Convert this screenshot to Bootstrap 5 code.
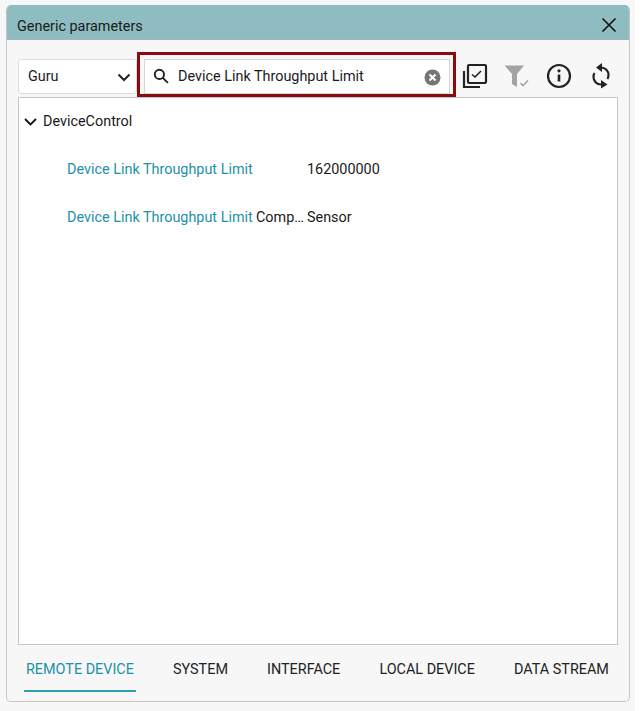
<!DOCTYPE html>
<html lang="en">
<head>
<meta charset="utf-8">
<title>Generic parameters</title>
<link rel="stylesheet" href="https://cdn.jsdelivr.net/npm/bootstrap@5.3.0/dist/css/bootstrap.min.css">
<style>
html,body{background:#fff;margin:0;height:711px;overflow:hidden}
body{font-family:Roboto,"Liberation Sans",sans-serif;font-size:14.4px;color:#1a1a1a}
.stage{width:635px;height:711px;background:#f7f7f7;padding:5px 5px 9px 6px}
.panel-win{height:697px;border:1px solid #c6c6c6;border-top:0;border-radius:5px;background:#f7f7f7;overflow:hidden}
.win-head{height:35px;background:#8fbcc0;border-bottom:1px solid #a9b5b6;padding:6px 12px 0 10px}
.win-title{padding-top:3px}
.win-body{padding:19px 11px 0 11px}
.tool-row{height:38px}
.sel-box{width:119px;height:35px;background:#fff;border:1px solid #dcdcdc;border-radius:3px;padding:1px 5px 0 9px}
.search-wrap{width:319px;height:45px;margin-top:-7px;border:3px solid #8b0a0f;background:#f7f7f7;padding:4px 3px 0 4px}
.search-box{height:35px;background:#fff;border:1px solid #d6d6d6;padding:1px 8px 0 8px;gap:9px}
.search-box span{flex:1}
.glass-ico{margin-bottom:2px}
.tool-icons{gap:16px;margin-left:6px;margin-top:4px}
.tree-box{height:548px;background:#fff;border:1px solid #c6c6c6;padding-top:1px}
.tree-head{height:45px;margin-bottom:2px;padding-left:5px;gap:6px}
.tree-line{height:48px;white-space:nowrap}
.cell-name{width:189px;margin-left:48px;color:#1c92a8}
.cell-tail{width:51px}
.tab-row{margin-top:12px;height:35px;gap:35.1px;margin-left:6px}
.tab-item{height:35px;color:#222;line-height:26px;padding:0 2px}
.tab-item.on{color:#1c92a8;border-bottom:2px solid #2f9fb2}
</style>
</head>
<body>
<div class="stage">
  <div class="panel-win">
    <div class="win-head d-flex align-items-center justify-content-between">
      <span class="win-title">Generic parameters</span>
      <svg width="16" height="16" viewBox="0 0 16 16" fill="none" stroke="#111" stroke-width="1.6"><path d="M1.5 1.5 14.5 14.5M14.5 1.5 1.5 14.5"/></svg>
    </div>
    <div class="win-body">
      <div class="tool-row d-flex align-items-start">
        <div class="sel-box d-flex align-items-center justify-content-between">
          <span>Guru</span>
          <svg width="14" height="9" viewBox="0 0 14 9" fill="none" stroke="#222" stroke-width="2"><path d="M1.5 1.5 7 7l5.500-5.500"/></svg>
        </div>
        <div class="search-wrap">
          <div class="search-box d-flex align-items-center">
            <svg class="glass-ico" width="16" height="16" viewBox="0 0 15 15" fill="none" stroke="#222" stroke-width="1.8"><circle cx="6" cy="6" r="4.3"/><path d="M9.200 9.200 14 14"/></svg>
            <span>Device Link Throughput Limit</span>
            <svg width="17" height="17" viewBox="0 0 17 17"><circle cx="8.500" cy="8.500" r="8" fill="#757575"/><path d="M5.500 5.500l6 6M11.500 5.500l-6 6" stroke="#fff" stroke-width="2"/></svg>
          </div>
        </div>
        <div class="tool-icons d-flex align-items-center">
          <svg width="26" height="26" viewBox="0 0 26 26" fill="none" stroke="#222"><path d="M2 8v16h16" stroke-width="2.200"/><rect x="6" y="2" width="18" height="18" rx="1" stroke-width="2.200"/><path d="M10 11.500l3 2.500 6-6" stroke-width="1.600"/></svg>
          <svg width="26" height="26" viewBox="0 0 26 26"><path d="M0.500 2.500h19.500l-7 8.500v13l-5-3v-10z" fill="#a3a3a3"/><path d="M16.500 20l2.500 2.500 5-5" fill="none" stroke="#a3a3a3" stroke-width="1.600"/></svg>
          <svg width="26" height="26" viewBox="0 0 26 26" fill="none" stroke="#222" stroke-width="2.200"><circle cx="13" cy="13" r="11"/><path d="M13 11.500v7" stroke-width="2.600"/><circle cx="13" cy="7.800" r="1.600" fill="#222" stroke="none"/></svg>
          <svg width="26" height="26" viewBox="0 0 26 26" fill="none" stroke="#222" stroke-width="2.200"><path d="M13 4.500c4.500 0 7.500 3.500 7.500 7.500 0 1.500-.3 2.800-1 4"/><path d="M6.500 10c-.8 1.200-1 2.500-1 4 0 4 3 7.500 7.500 7.500"/><path d="M14 0 8 4.500 14 9z" fill="#222" stroke="none"/><path d="M13 17l6.500 4.500L13 25.500z" fill="#222" stroke="none"/></svg>
        </div>
      </div>
      <div class="tree-box">
        <div class="tree-head d-flex align-items-center">
          <svg width="13" height="8" viewBox="0 0 13 8" fill="none" stroke="#111" stroke-width="1.800"><path d="M1 1l5.500 5.500L12 1"/></svg>
          <span>DeviceControl</span>
        </div>
        <div class="tree-line d-flex align-items-center">
          <span class="cell-name">Device Link Throughput Limit</span>
          <span class="cell-tail"></span>
          <span>162000000</span>
        </div>
        <div class="tree-line d-flex align-items-center">
          <span class="cell-name">Device Link Throughput Limit</span>
          <span class="cell-tail">Comp…</span>
          <span>Sensor</span>
        </div>
      </div>
      <div class="tab-row d-flex">
        <div class="tab-item on">REMOTE DEVICE</div>
        <div class="tab-item">SYSTEM</div>
        <div class="tab-item">INTERFACE</div>
        <div class="tab-item">LOCAL DEVICE</div>
        <div class="tab-item">DATA STREAM</div>
      </div>
    </div>
  </div>
</div>
<script src="https://cdn.jsdelivr.net/npm/bootstrap@5.3.0/dist/js/bootstrap.bundle.min.js"></script>
</body>
</html>
